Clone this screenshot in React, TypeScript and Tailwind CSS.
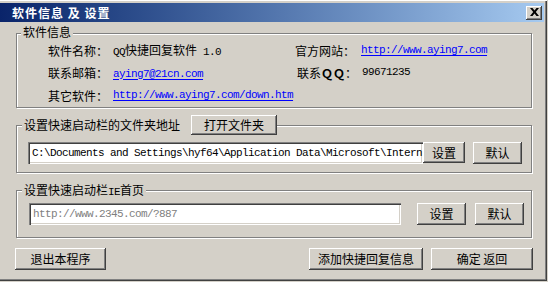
import React from "react";

const CJK = "font-['Noto_Sans_CJK_SC','Noto_Sans_CJK_JP',sans-serif] text-[12px]";
const MONO = "font-['Liberation_Mono','DejaVu_Sans_Mono',monospace] text-[11px] tracking-[-0.6px]";

function Mixed({ text }: { text: string }) {
  const parts = text.split(/([\x20-\x7E]+)/).filter((p) => p.length > 0);
  return (
    <>
      {parts.map((p, i) =>
        /^[\x20-\x7E]+$/.test(p) ? (
          <span key={i} className={MONO + " whitespace-pre"}>
            {p}
          </span>
        ) : (
          <span key={i} className={CJK}>
            {p}
          </span>
        )
      )}
    </>
  );
}

const BTN =
  "flex items-center justify-center bg-[#d4d0c8] text-black leading-[14px] shadow-[inset_-1px_-1px_0_#404040,inset_1px_1px_0_#ffffff,inset_-2px_-2px_0_#808080,inset_2px_2px_0_#d4d0c8] " +
  CJK;

const INPUT =
  "flex items-center overflow-hidden whitespace-nowrap bg-white pl-[4px] shadow-[inset_1px_1px_0_#808080,inset_2px_2px_0_#404040,inset_-1px_-1px_0_#ffffff,inset_-2px_-2px_0_#d4d0c8]";

const GROUP =
  "relative ml-[16px] w-[516px] border border-[#808080] shadow-[inset_1px_1px_0_#ffffff,1px_1px_0_#ffffff]";

function Link({ text }: { text: string }) {
  return <span className={MONO + " text-[#0000ff] underline underline-offset-[2px]"}>{text}</span>;
}

export default function App() {
  return (
    <div className="w-[548px] h-[282px] bg-[#d4d0c8] overflow-hidden text-black">
      <div className="w-[547px] h-[281px] flex flex-col pt-[3px] shadow-[inset_0_1px_0_#ffffff,inset_-1px_-1px_0_#404040,inset_-2px_-2px_0_#808080]">
        {/* Title bar */}
        <div className="h-[19px] mr-[3px] flex items-center justify-between pl-[12px] pr-[2px] bg-linear-to-r from-[#0a246a] to-[#a6caf0]">
          <span className={CJK + " font-bold text-white tracking-[1px] leading-[14px] whitespace-pre"}>软件信息 及 设置</span>
          <div className="w-[16px] h-[14px] flex items-center justify-center bg-[#d4d0c8] shadow-[inset_-1px_-1px_0_#404040,inset_1px_1px_0_#ffffff,inset_-2px_-2px_0_#808080]">
            <svg width="9" height="8" viewBox="0 0 9 8" className="mb-[1px]">
              <path d="M0 0h2.5l2 2.4 2-2.4H9L5.8 4 9 8H6.5l-2-2.4-2 2.4H0l3.2-4z" fill="#000" />
            </svg>
          </div>
        </div>

        {/* Group 1 */}
        <div className={GROUP + " mt-[11px] h-[75px]"}>
          <div className={"absolute left-[4px] -top-[9px] px-[2px] bg-[#d4d0c8] leading-[14px] " + CJK}>软件信息</div>
          <div className="flex flex-col pl-[31px] pt-[9px] leading-[14px]">
            <div className="flex items-center h-[14px]">
              <div className="w-[65px]"><Mixed text="软件名称：" /></div>
              <div className="w-[182px] whitespace-nowrap"><Mixed text="QQ快捷回复软件 1.0" /></div>
              <div className="w-[66px]"><Mixed text="官方网站：" /></div>
              <Link text="http://www.aying7.com" />
            </div>
            <div className="flex items-center h-[14px] mt-[8px]">
              <div className="w-[65px]"><Mixed text="联系邮箱：" /></div>
              <div className="w-[182px]"><Link text="aying7@21cn.com" /></div>
              <div className="w-[67px] pl-[2px] whitespace-nowrap">
                <span className={CJK}>联系</span>
                <span className={CJK + " font-bold"}>ＱＱ</span>
                <span className={CJK}>：</span>
              </div>
              <span className={MONO}>99671235</span>
            </div>
            <div className="flex items-center h-[14px] mt-[9px]">
              <div className="w-[65px]"><Mixed text="其它软件：" /></div>
              <Link text="http://www.aying7.com/down.htm" />
            </div>
          </div>
        </div>

        {/* Group 2 */}
        <div className={GROUP + " mt-[17px] h-[48px]"}>
          <div className="absolute left-[5px] -top-[11px] pl-[2px] bg-[#d4d0c8] flex items-center">
            <span className={CJK + " leading-[14px]"}>设置快速启动栏的文件夹地址</span>
            <div className={BTN + " ml-[11px] w-[86px] h-[20px]"}>打开文件夹</div>
          </div>
          <div className="flex items-start mt-[16px] ml-[11px]">
            <div className={INPUT + " w-[395px] h-[22px]"}>
              <span className={MONO + " text-black"}>C:\Documents and Settings\hyf64\Application Data\Microsoft\Intern</span>
            </div>
            <div className={BTN + " w-[42px] h-[21px]"}>设置</div>
            <div className={BTN + " ml-[8px] w-[49px] h-[22px]"}>默认</div>
          </div>
        </div>

        {/* Group 3 */}
        <div className={GROUP + " mt-[17px] h-[48px]"}>
          <div className="absolute left-[5px] -top-[9px] px-[2px] bg-[#d4d0c8] leading-[14px]">
            <Mixed text="设置快速启动栏IE首页" />
          </div>
          <div className="flex items-start mt-[12px] ml-[12px]">
            <div className={INPUT + " w-[372px] h-[22px]"}>
              <span className={MONO + " text-[#808080]"}>http://www.2345.com/?887</span>
            </div>
            <div className={BTN + " ml-[16px] w-[49px] h-[22px]"}>设置</div>
            <div className={BTN + " ml-[9px] w-[49px] h-[22px]"}>默认</div>
          </div>
        </div>

        {/* Bottom buttons */}
        <div className="flex mt-[10px]">
          <div className={BTN + " ml-[15px] w-[91px] h-[22px]"}>退出本程序</div>
          <div className={BTN + " ml-[203px] w-[114px] h-[22px]"}>添加快捷回复信息</div>
          <div className={BTN + " ml-[8px] w-[102px] h-[22px] whitespace-pre"}>确定 返回</div>
        </div>
      </div>
    </div>
  );
}
